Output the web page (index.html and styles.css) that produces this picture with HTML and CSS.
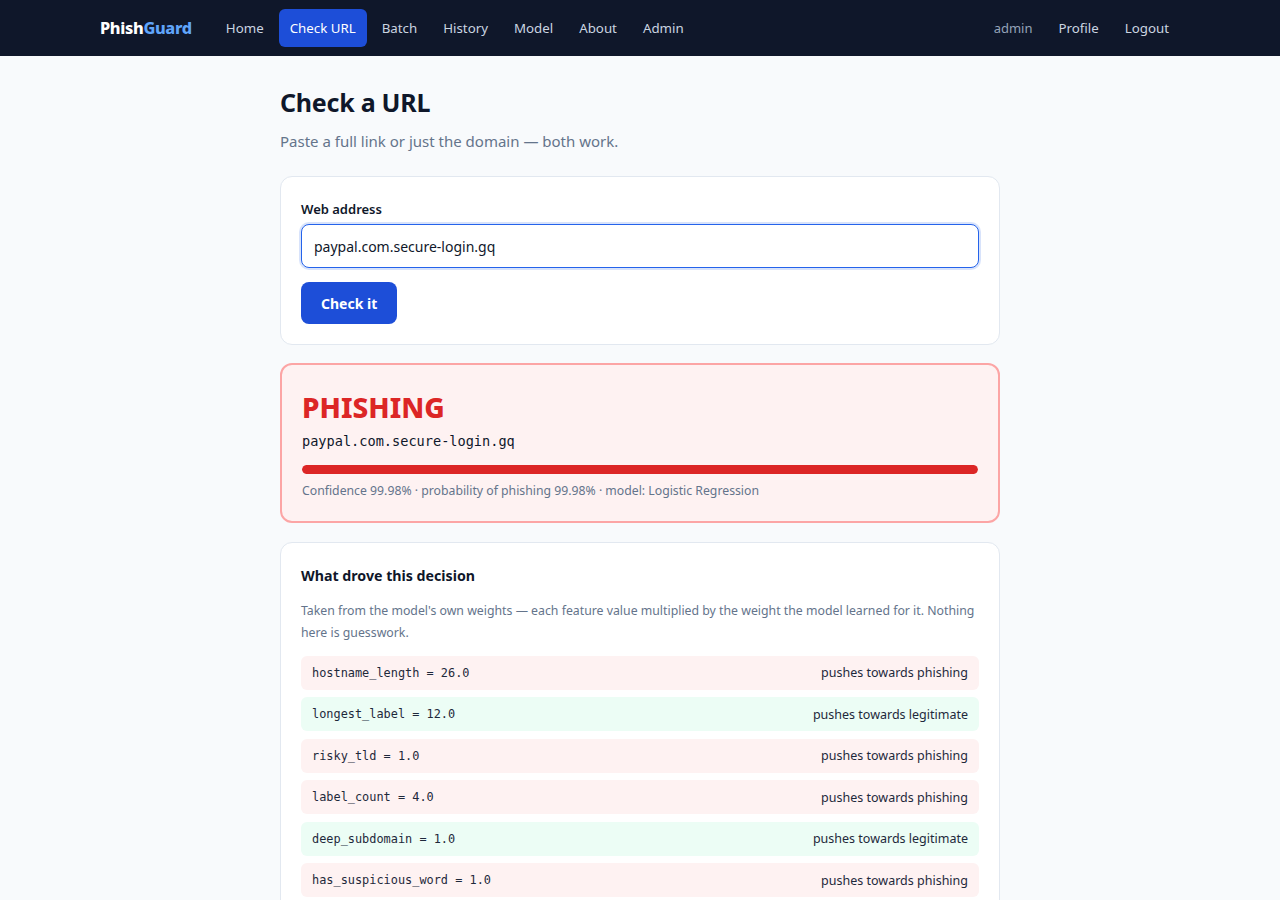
FILE: index.html
```html
<!DOCTYPE html>
<html lang="en">
<head>
<meta charset="UTF-8">
<meta name="viewport" content="width=device-width, initial-scale=1.0">
<title>PhishGuard — Check URL</title>
<link rel="stylesheet" href="styles.css">
</head>
<body>

<nav class="topbar">
  <div class="topbar-inner">
    <a class="brand" href="#">Phish<span>Guard</span></a>
    <div class="nav-links">
      <a href="#">Home</a>
      <a href="#" class="active">Check URL</a>
      <a href="#">Batch</a>
      <a href="#">History</a>
      <a href="#">Model</a>
      <a href="#">About</a>
      <a href="#">Admin</a>
    </div>
    <div class="nav-user">
      <span class="who">admin</span>
      <a href="#">Profile</a>
      <a href="#">Logout</a>
    </div>
  </div>
</nav>

<main class="page">
  <h1>Check a URL</h1>
  <p class="lead">Paste a full link or just the domain — both work.</p>

  <!-- form -->
  <form class="card">
    <label for="url">Web address</label>
    <input id="url" type="text" value="paypal.com.secure-login.gq">
    <button type="button">Check it</button>
  </form>

  <!-- verdict -->
  <section class="verdict bad">
    <h2>PHISHING</h2>
    <div class="verdict-url">paypal.com.secure-login.gq</div>
    <div class="meter"><div class="meter-fill" style="width: 99.98%"></div></div>
    <p class="verdict-meta">Confidence 99.98% · probability of phishing 99.98% · model: Logistic Regression</p>
  </section>

  <!-- explanation -->
  <section class="card">
    <h3>What drove this decision</h3>
    <p class="note">Taken from the model's own weights — each feature value multiplied by the weight the model learned for it. Nothing here is guesswork.</p>
    <ul class="factors">
      <li class="up"><code>hostname_length = 26.0</code><span>pushes towards phishing</span></li>
      <li class="down"><code>longest_label = 12.0</code><span>pushes towards legitimate</span></li>
      <li class="up"><code>risky_tld = 1.0</code><span>pushes towards phishing</span></li>
      <li class="up"><code>label_count = 4.0</code><span>pushes towards phishing</span></li>
      <li class="down"><code>deep_subdomain = 1.0</code><span>pushes towards legitimate</span></li>
      <li class="up"><code>has_suspicious_word = 1.0</code><span>pushes towards phishing</span></li>
    </ul>
  </section>
</main>

</body>
</html>
```

FILE: styles.css
```css
*, *::before, *::after { box-sizing: border-box; }

:root {
  --nav-bg: #0f172a;
  --bg: #f8fafc;
  --text: #0f172a;
  --muted: #64748b;
  --border: #e2e8f0;
  --blue: #1d4ed8;
  --red: #dc2626;
  --mono: "DejaVu Sans Mono", "Liberation Mono", monospace;
}

body {
  margin: 0;
  font-family: "Noto Sans", "Open Sans", sans-serif;
  background: var(--bg);
  color: var(--text);
}

/* ── NAV ── */
.topbar {
  background: var(--nav-bg);
  height: 56px;
}

.topbar-inner {
  max-width: 1080px;
  margin: 0 auto;
  height: 100%;
  display: flex;
  align-items: center;
}

.brand {
  font-weight: 800;
  font-size: 16.3px;
  color: #fff;
  text-decoration: none;
  margin-right: 23px;
  letter-spacing: -0.02em;
}
.brand span { color: #60a5fa; }

.nav-links,
.nav-user {
  display: flex;
  align-items: center;
  gap: 4px;
}

.nav-links a,
.nav-user a,
.nav-user .who {
  color: #cbd5e1;
  text-decoration: none;
  font-size: 13.3px;
  padding: 10px 11px;
  border-radius: 6px;
}

.nav-links a.active {
  background: var(--blue);
  color: #fff;
}

.nav-user { margin-left: auto; }
.nav-user .who { color: #94a3b8; font-size: 13px; }

/* ── PAGE ── */
.page {
  max-width: 720px;
  margin: 0 auto;
  padding: 29px 0 40px;
}

h1 {
  font-size: 25px;
  font-weight: 700;
  margin: 0 0 12px;
  letter-spacing: -0.01em;
}

.lead {
  color: var(--muted);
  font-size: 15px;
  margin: 0 0 25px;
}

.card {
  background: #fff;
  border: 1px solid var(--border);
  border-radius: 12px;
  padding: 20px;
  margin-bottom: 19px;
}

form.card { margin-bottom: 18px; }

form.card label {
  display: block;
  font-size: 13px;
  font-weight: 600;
  margin: 3px 0 6px;
}

form.card input {
  display: block;
  width: 100%;
  height: 44px;
  border: 1px solid #2563eb;
  box-shadow: 0 0 0 2px rgba(37,99,235,0.18);
  border-radius: 8px;
  padding: 0 12px;
  font: inherit;
  font-size: 14px;
  color: var(--text);
  outline: none;
  margin-bottom: 14px;
}

form.card button {
  background: var(--blue);
  color: #fff;
  border: 0;
  border-radius: 8px;
  height: 42px;
  padding: 0 20px;
  font: inherit;
  font-size: 14px;
  font-weight: 700;
}

/* ── VERDICT ── */
.verdict {
  border-radius: 12px;
  padding: 26px 20px 22px;
  margin-bottom: 19px;
}
.verdict.bad {
  background: #fef2f2;
  border: 2px solid #fca5a5;
}

.verdict h2 {
  margin: 0 0 8px;
  font-size: 28px;
  font-weight: 800;
  color: var(--red);
  line-height: 1.2;
}

.verdict-url {
  font-family: var(--mono);
  font-size: 13.6px;
  margin-bottom: 16px;
}

.meter {
  height: 9px;
  border-radius: 999px;
  background: #fecaca;
  overflow: hidden;
  margin-bottom: 8px;
}
.meter-fill {
  height: 100%;
  background: var(--red);
  border-radius: 999px;
}

.verdict-meta {
  margin: 0;
  font-size: 12.25px;
  color: var(--muted);
}

/* ── FACTORS ── */
h3 {
  font-size: 14.2px;
  font-weight: 700;
  margin: 3px 0 15px;
}

.note {
  font-size: 12.3px;
  line-height: 22px;
  color: var(--muted);
  margin: 0 0 12px;
}

.factors {
  list-style: none;
  margin: 0;
  padding: 0;
  display: flex;
  flex-direction: column;
  gap: 7.5px;
}

.factors li {
  display: flex;
  align-items: center;
  justify-content: space-between;
  height: 34px;
  padding: 0 11px;
  border-radius: 6px;
  font-size: 12.5px;
  color: #1e293b;
}
.factors li.up { background: #fef2f2; }
.factors li.down { background: #ecfdf5; }

.factors code {
  font-family: var(--mono);
  font-size: 11.9px;
}
```
